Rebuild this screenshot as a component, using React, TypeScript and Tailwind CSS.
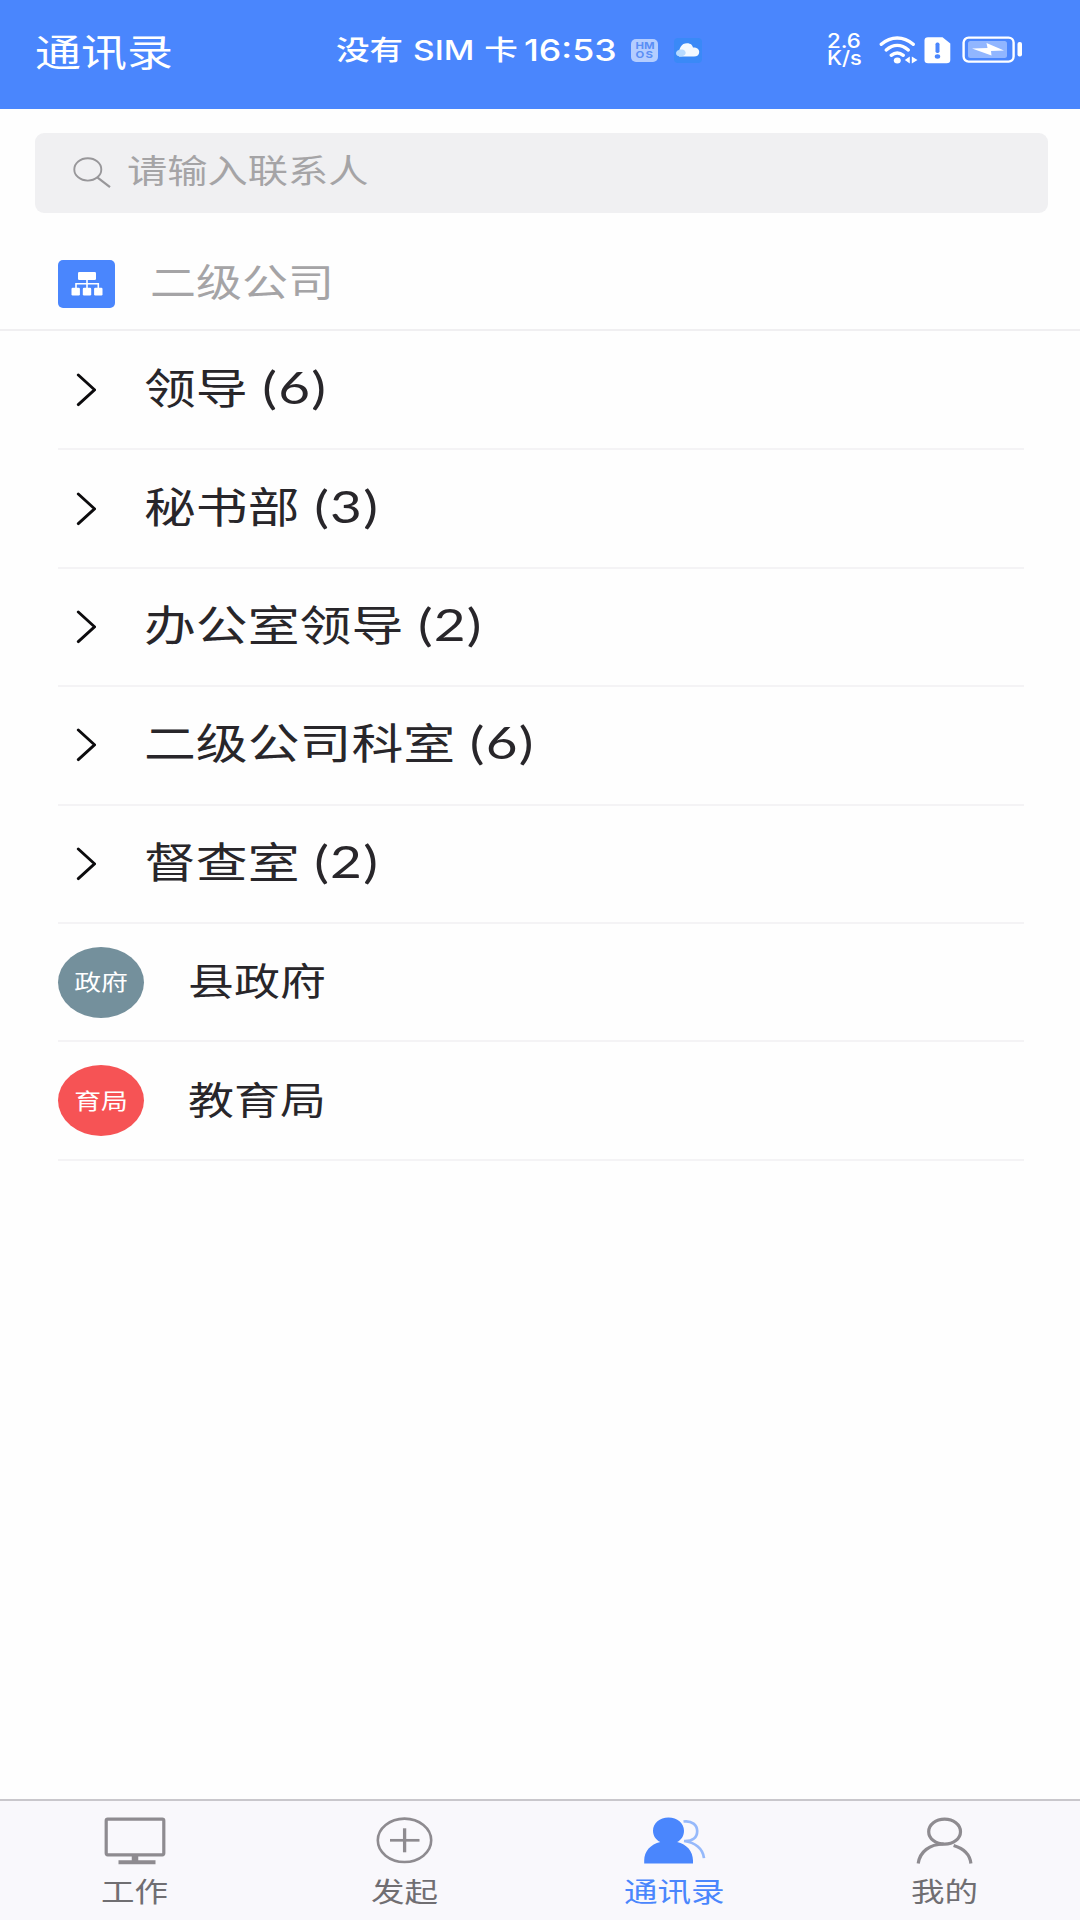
import { useState } from 'react';
import type { ReactNode } from 'react';

interface Department {
  name: string;
  count: number;
}

interface Organization {
  name: string;
  short: string;
  color: string;
}

interface Tab {
  id: string;
  label: string;
  icon: ReactNode;
}

const departments: Department[] = [
  { name: '领导', count: 6 },
  { name: '秘书部', count: 3 },
  { name: '办公室领导', count: 2 },
  { name: '二级公司科室', count: 6 },
  { name: '督查室', count: 2 },
];

const organizations: Organization[] = [
  { name: '县政府', short: '政府', color: 'bg-[#74909c]' },
  { name: '教育局', short: '育局', color: 'bg-[#f65355]' },
];

const tabs: Tab[] = [
  { id: 'work', label: '工作', icon: <WorkIcon /> },
  { id: 'create', label: '发起', icon: <CreateIcon /> },
  { id: 'contacts', label: '通讯录', icon: <ContactsIcon /> },
  { id: 'mine', label: '我的', icon: <MineIcon /> },
];

function WorkIcon() {
  return (
    <svg width="62" height="50" viewBox="0 0 62 50" fill="none" stroke="#8e8b90">
      <rect x="2.2" y="2.2" width="57.6" height="35.6" rx="1.5" strokeWidth="3.2" />
      <path d="M31 38v7" strokeWidth="6.5" />
      <path d="M14.5 45.3h37" strokeWidth="4" />
    </svg>
  );
}

function CreateIcon() {
  return (
    <svg width="62" height="50" viewBox="0 0 62 50" fill="none" stroke="#8e8b90">
      <ellipse cx="30.5" cy="23.3" rx="26.7" ry="21.7" strokeWidth="2.6" />
      <path d="M16 23.3h29.5" strokeWidth="2.7" />
      <path d="M30.6 11.3v24" strokeWidth="3.3" />
    </svg>
  );
}

function ContactsIcon() {
  return (
    <svg width="62" height="50" viewBox="0 0 62 50" fill="none">
      <path
        d="M39.5 4.5C48 3.3 53.2 8 53.2 14C53.2 20.5 49 24.3 40 24C51 25.3 59 31.5 60 41.2"
        stroke="#96b9fb"
        strokeWidth="2.7"
      />
      <path
        d="M24.5.5C33.3.5 40 6.3 40 13.7C40 18.7 37.5 22.8 33.1 25C42.8 27.2 49 34.3 49 43.5V46.5H.2V43.5C.2 34.3 6.6 27.2 16.3 25C11.8 22.8 9 18.7 9 13.7C9 6.3 15.7.5 24.5.5Z"
        fill="#4a86fd"
      />
    </svg>
  );
}

function MineIcon() {
  return (
    <svg width="62" height="50" viewBox="0 0 62 50" fill="none" stroke="#8e8b90" strokeWidth="3.2">
      <ellipse cx="30.6" cy="14.7" rx="15.9" ry="12.5" />
      <path d="M4.2 46.5C5.9 34.5 15.6 27.3 29.6 27" />
      <path d="M39.6 28.5C49.6 31.5 56 38 56.9 46.5" />
    </svg>
  );
}

function SearchIcon() {
  return (
    <svg width="38" height="32" viewBox="0 0 38 32" fill="none" stroke="#98979a" strokeWidth="1.9">
      <ellipse cx="14.8" cy="12.4" rx="13.5" ry="11.2" />
      <path d="M24.3 20.4L37 30.2" strokeWidth="2.2" />
    </svg>
  );
}

function OrgIcon() {
  return (
    <svg width="32" height="25" viewBox="0 0 32 25" fill="#fff">
      <rect x="7" y="1" width="18" height="8" rx="1.3" />
      <rect x=".5" y="16.8" width="8.4" height="7.6" rx="1.2" />
      <rect x="11.8" y="16.8" width="8.4" height="7.6" rx="1.2" />
      <rect x="23.1" y="16.8" width="8.4" height="7.6" rx="1.2" />
      <path d="M16 8.5v9M5 17v-4.2h22.3V17" fill="none" stroke="#fff" strokeWidth="1.6" />
    </svg>
  );
}

function ChevronIcon() {
  return (
    <svg width="20" height="34" viewBox="0 0 20 34" fill="none" stroke="#0c0b0d" strokeWidth="2.9" strokeLinecap="round">
      <path d="M2.3 2L18.5 16.8L2.3 31.6" />
    </svg>
  );
}

function WifiIcon() {
  return (
    <svg width="40" height="30" viewBox="0 0 40 30" fill="none" stroke="#fff" strokeWidth="3.4" strokeLinecap="round">
      <path d="M2.3 9.3C12 .8 24.5.8 34.2 9.3" />
      <path d="M7.2 15C14.2 9 22.3 9 29.3 15" />
      <path d="M12.2 20.3C16 17.3 20.5 17.3 24.3 20.3" />
      <ellipse cx="18.3" cy="25.5" rx="3.5" ry="3" fill="#fff" stroke="none" />
      <path d="M30.8 21.5v7l-5-3.5zM32.8 21.5v7l5.7-3.5z" fill="#fff" stroke="none" />
    </svg>
  );
}

function SimAlertIcon() {
  return (
    <svg width="27" height="27" viewBox="0 0 27 27">
      <path d="M4 .3H18.5L26.3 6.5V23Q26.3 26.3 22.6 26.3H4Q.5 26.3.5 23V3.5Q.5.3 4 .3Z" fill="#fff" />
      <rect x="11.5" y="5.5" width="4" height="10.5" rx="1.7" fill="#4a86fd" />
      <ellipse cx="13.5" cy="19.5" rx="2.7" ry="2.2" fill="#4a86fd" />
    </svg>
  );
}

function BatteryIcon() {
  return (
    <svg width="62" height="28" viewBox="0 0 62 28">
      <rect x="1.6" y="1.6" width="50" height="24" rx="5" fill="none" stroke="#fff" strokeWidth="2.4" />
      <rect x="6" y="5" width="39" height="17" rx="2.5" fill="#91b6ff" />
      <path d="M10 12.5L25.5 12L24.500 7L42 14.5L29 15L29.500 19.500Z" fill="#fff" />
      <rect x="55.5" y="6" width="4.5" height="14.5" rx="2" fill="#fff" />
    </svg>
  );
}

function CloudIcon() {
  return (
    <svg width="28" height="25" viewBox="0 0 28 25">
      <rect width="28" height="25" rx="4" fill="#3a89f7" />
      <path d="M5 18.5C4.5 10 7.5 5.3 13 5.3C17 5.3 18.5 7.5 19 9.5C23.5 9.5 25.2 11.5 25.2 14C25.2 17 23 18.5 20 18.5Z" fill="#f3f9ff" />
      <path d="M7 18.5C12 17.5 13 14.5 10 12C6 10.5 2 12.5 2 15.3C2 17.5 4 18.5 7 18.5Z" fill="#b8dbff" />
    </svg>
  );
}

function Header() {
  return (
    <header className="flex h-[109px] shrink-0 items-start bg-[#4a86fd] text-white">
      <div className="w-[336px] shrink-0 pl-[35px] pt-[23px]">
        <h1 className="origin-left scale-x-[1.21] whitespace-nowrap text-[38px] leading-[56px]">通讯录</h1>
      </div>
      <div className="flex h-[100px] w-[491px] shrink-0 items-center font-['Inter','Noto_Sans_CJK_SC',sans-serif]">
        <div className="w-[188px] shrink-0">
          <p className="origin-left scale-x-[1.22] whitespace-nowrap text-[27.5px] font-medium leading-10 [word-spacing:0.8px]">
            没有 SIM 卡
          </p>
        </div>
        <div className="w-[107px] shrink-0">
          <p className="origin-left scale-x-[1.19] whitespace-nowrap text-[30px] font-medium leading-10">16:53</p>
        </div>
        <div className="mr-4 flex h-[23px] w-[27px] flex-col items-center justify-center rounded-[5px] bg-[#b4cdff] text-[9.5px] font-bold leading-[9.5px] text-[#5b8ff5]">
          <span className="scale-x-[1.2]">HM</span>
          <span className="scale-x-[1.2] tracking-[1px]">OS</span>
        </div>
        <CloudIcon />
      </div>
      <div className="flex w-[52px] shrink-0 flex-col pt-[33px] font-['Inter',sans-serif] text-[19.5px] font-medium leading-[17px]">
        <span className="origin-left scale-x-[1.14] whitespace-nowrap">2.6</span>
        <span className="origin-left scale-x-[1.12] whitespace-nowrap">K/s</span>
      </div>
      <div className="flex h-[100px] items-center">
        <WifiIcon />
        <span className="ml-[5px] mr-[11px]">
          <SimAlertIcon />
        </span>
        <BatteryIcon />
      </div>
    </header>
  );
}

export default function App() {
  const [activeTab, setActiveTab] = useState('contacts');
  const [keyword, setKeyword] = useState('');

  return (
    <div className="flex h-[1920px] w-[1080px] flex-col overflow-hidden bg-[#fefefe] font-['Lato','Noto_Sans_CJK_SC',sans-serif] text-[#28262a]">
      <Header />

      {/* Search */}
      <div className="ml-[35px] mr-8 mt-6 flex h-20 shrink-0 items-center rounded-[9px] bg-[#f0f0f2] pl-[38px]">
        <SearchIcon />
        <input
          type="text"
          placeholder="请输入联系人"
          value={keyword}
          onChange={(e) => setKeyword(e.target.value)}
          className="ml-4 h-14 w-[600px] origin-left scale-x-[1.22] bg-transparent pb-1.5 text-[33px] placeholder:text-[#a5a4a6] focus:outline-none"
        />
      </div>

      {/* Current company */}
      <div className="flex h-[118px] shrink-0 items-center border-b-2 border-[#f0eff1] pl-[58px] pt-[25px]">
        <span className="flex h-12 w-[57px] items-center justify-center rounded-[5px] bg-[#4a86fd]">
          <OrgIcon />
        </span>
        <span className="ml-[35px] origin-left scale-x-[1.21] whitespace-nowrap pb-[6px] text-[38px] leading-[48px] text-[#a5a4a6]">二级公司</span>
      </div>

      <ul className="flex-1 pl-[58px] pr-14 pt-px">
        {departments.map((item) => (
          <li key={item.name} className="flex h-[118.4px] items-center border-b-2 border-[#f4f3f5] pl-[18px]">
            <ChevronIcon />
            <span className="ml-[48px] flex origin-left scale-x-[1.22] items-baseline whitespace-nowrap pb-[5px] text-[42.5px] leading-[60px]">
              {item.name}
              <span className="ml-3 text-[45px] tracking-[1px]">({item.count})</span>
            </span>
          </li>
        ))}
        {organizations.map((item) => (
          <li key={item.name} className="flex h-[118.4px] items-center border-b-2 border-[#f4f3f5]">
            <span className={`flex h-[71px] w-[86px] items-center justify-center rounded-[50%] text-white ${item.color}`}>
              <span className="scale-x-[1.22] whitespace-nowrap text-[22px] leading-8">{item.short}</span>
            </span>
            <span className="ml-[44px] origin-left scale-x-[1.21] whitespace-nowrap pb-1 text-[38px] leading-[56px]">{item.name}</span>
          </li>
        ))}
      </ul>

      <nav className="grid h-[121px] shrink-0 grid-cols-4 border-t-2 border-[#c9c7cc] bg-[#f9f8fc]">
        {tabs.map((tab) => (
          <button key={tab.id} onClick={() => setActiveTab(tab.id)} className="flex flex-col items-center pt-4">
            {tab.icon}
            <span
              className={`mr-px mt-[5px] scale-x-[1.22] whitespace-nowrap text-[27.5px] leading-10 ${
                activeTab === tab.id ? 'text-[#4a86fd]' : 'text-[#706e72]'
              }`}
            >
              {tab.label}
            </span>
          </button>
        ))}
      </nav>
    </div>
  );
}
